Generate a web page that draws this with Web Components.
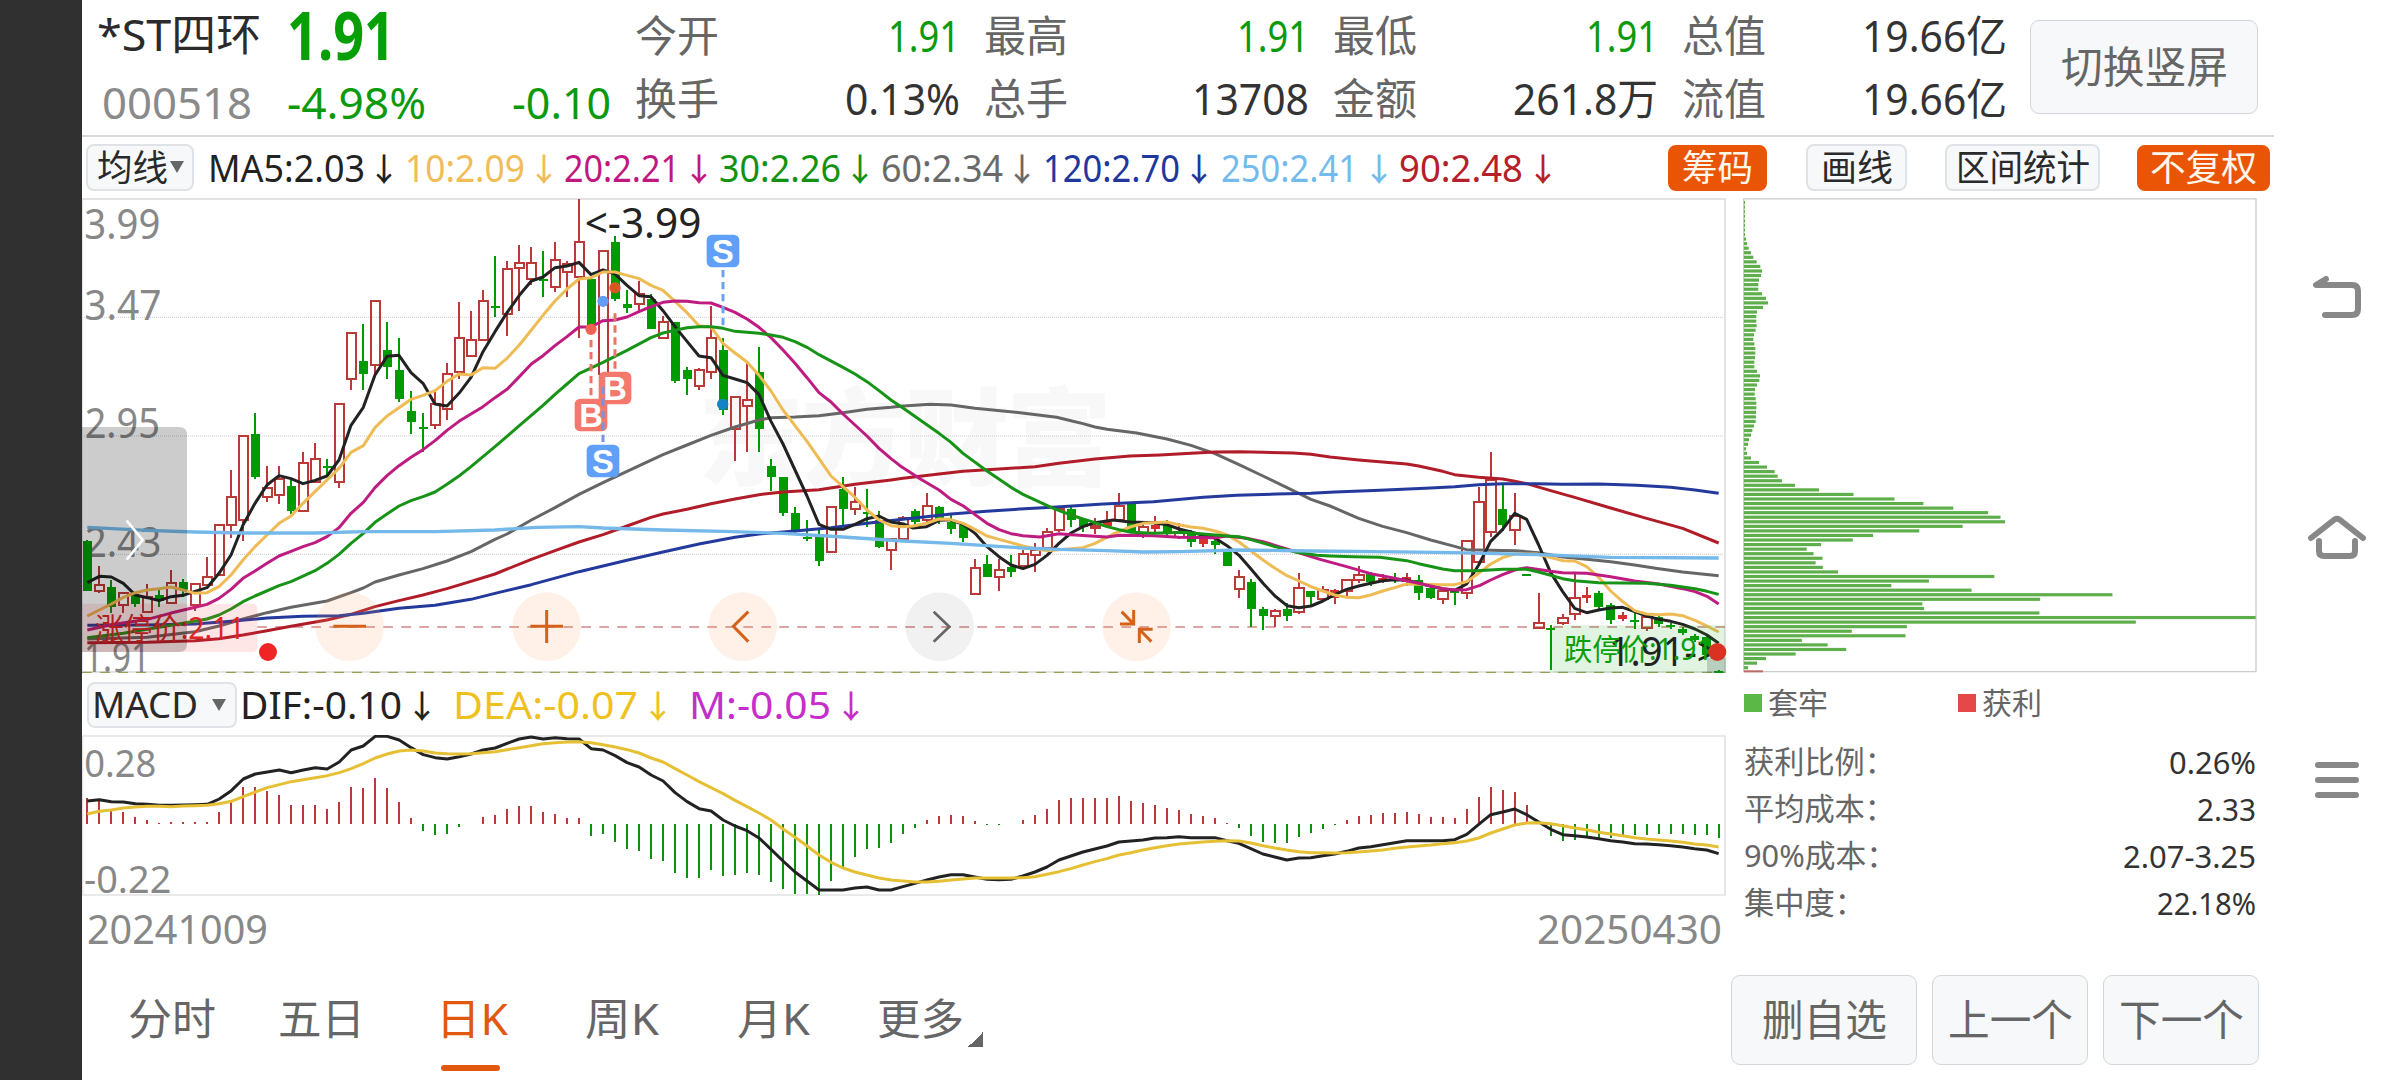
<!DOCTYPE html>
<html lang="zh-CN">
<head>
<meta charset="utf-8">
<title>*ST四环 000518</title>
<style>
html,body{margin:0;height:100%;background:#fff;overflow:hidden}
body{font-family:"Noto Sans","Noto Sans CJK SC",sans-serif;color:#2b2b2b}
</style>
</head>
<body>
<stock-app></stock-app>
<script>
const define=(name,cls)=>customElements.define(name,cls);
const shadow=(el,html)=>{const r=el.attachShadow({mode:'open'});r.innerHTML=html;return r};

/* One line of text condensed or stretched to a given width. */
define('fit-text',class extends HTMLElement{
  connectedCallback(){
    const w=+this.getAttribute('w'),s=this.getAttribute('s')||42,lh=this.getAttribute('lh')||1.2;
    const r=shadow(this,`<style>:host{display:block;flex:none;width:${w}px;height:${lh}em;font-size:${s}px;line-height:${lh};white-space:nowrap}
      span{display:inline-block;transform-origin:0 50%}</style><span><slot></slot></span>`);
    const sp=r.querySelector('span');
    sp.style.transform=`scaleX(${w/sp.getBoundingClientRect().width})`;
  }
});

define('push-button',class extends HTMLElement{
  connectedCallback(){
    shadow(this,`<style>:host{display:flex;flex:none;box-sizing:border-box;align-items:center;justify-content:center;width:${this.getAttribute('w')}px;height:${this.getAttribute('h')}px;
      border:2px solid #dfe2e6;border-radius:${this.getAttribute('r')||8}px;background:#f7f8fa;color:#2a2a2a}
      :host([soft]){color:#666;border-width:1.5px;border-color:#d2d6dc}
      :host([active]){background:#e95505;border-color:#e95505;color:#fff6ec}</style><slot></slot>`);
  }
});

define('quote-stat',class extends HTMLElement{
  connectedCallback(){
    const a=n=>this.getAttribute(n);
    const line=(l,v,w,c)=>`<div><fit-text class="l" w="84" s="43">${l}</fit-text><fit-text w="${w}" s="43" style="color:${c}">${v}</fit-text></div>`;
    shadow(this,`<style>:host{display:flex;flex:none;flex-direction:column;width:325px;padding-top:4px;margin-right:24px;color:#333}
      div{display:flex;height:63.5px;align-items:center;justify-content:space-between}.l{color:#666}</style>
      ${line(a('l1'),a('v1'),a('w1'),a('c1')||'#333')}${line(a('l2'),a('v2'),a('w2'),'#333')}`);
  }
});

define('quote-header',class extends HTMLElement{
  connectedCallback(){
    shadow(this,`<style>:host{display:flex;box-sizing:border-box;width:2192px;height:137px;border-bottom:2px solid #d9d9d9;padding-left:15px}
      .c{display:flex;flex-direction:column;flex:none}.r1{display:flex;align-items:center;height:70px}.r2{display:flex;align-items:center;height:68px;justify-content:space-between}
      .g{color:#0b9a0b}</style>
      <div class="c" style="width:190px"><div class="r1"><fit-text w="164" s="44">*ST四环</fit-text></div>
        <div class="r2" style="justify-content:flex-start;padding-left:5px;color:#8a8a8a"><fit-text w="150" s="44.500">000518</fit-text></div></div>
      <div class="c g" style="width:324px;margin-right:24px"><div class="r1" style="height:71px;margin-bottom:-1px"><fit-text w="108" s="67" lh="1" style="font-weight:700;color:#06a006">1.91</fit-text></div>
        <div class="r2"><fit-text w="139" s="44.500">-4.98%</fit-text><fit-text w="99" s="44.500">-0.10</fit-text></div></div>
      <quote-stat l1="今开" v1="1.91" w1="72" c1="#0b9a0b" l2="换手" v2="0.13%" w2="115"></quote-stat>
      <quote-stat l1="最高" v1="1.91" w1="72" c1="#0b9a0b" l2="总手" v2="13708" w2="117"></quote-stat>
      <quote-stat l1="最低" v1="1.91" w1="72" c1="#0b9a0b" l2="金额" v2="261.8万" w2="145"></quote-stat>
      <quote-stat l1="总值" v1="19.66亿" w1="145" l2="流值" v2="19.66亿" w2="145"></quote-stat>
      <push-button soft w="228" h="94" r="9" style="margin:20px 0 0 -1px"><fit-text w="167" s="43">切换竖屏</fit-text></push-button>`);
  }
});

/* name:value readout followed by its trend arrow */
define('trend-value',class extends HTMLElement{
  connectedCallback(){
    const a=n=>this.getAttribute(n);
    shadow(this,`<style>:host{display:flex;flex:none;align-items:center;color:${a('c')};margin-left:${a('gap')}px}
      .a{width:16px;margin-left:${a('ag')||11}px;font:500 32px/1.2 "Noto Sans CJK SC",sans-serif;display:flex;justify-content:center}</style>
      <fit-text w="${a('w')}" s="${a('s')||38}"><slot></slot></fit-text><span class="a">↓</span>`);
  }
});

define('average-bar',class extends HTMLElement{
  connectedCallback(){
    shadow(this,`<style>:host{display:flex;height:61px;align-items:center;padding-left:4px;width:2188px;box-sizing:border-box}
      i{border:7.5px solid transparent;border-top:12px solid #666;border-bottom:0;margin:-2px 0 0 2px}</style>
      <push-button w="108" h="47"><fit-text w="71" s="36">均线</fit-text><i></i></push-button>
      <trend-value gap="14" w="157" c="#222">MA5:2.03</trend-value>
      <trend-value gap="13" w="120" c="#f0bd58">10:2.09</trend-value>
      <trend-value gap="12" w="116" c="#c0187f">20:2.21</trend-value>
      <trend-value gap="12" w="122" c="#119311">30:2.26</trend-value>
      <trend-value gap="13" w="122" c="#6a6a6a">60:2.34</trend-value>
      <trend-value gap="13" w="137" c="#20379d">120:2.70</trend-value>
      <trend-value gap="14" w="137" ag="13" c="#73bbec">250:2.41</trend-value>
      <trend-value gap="12" w="124" ag="12" c="#b5202a">90:2.48</trend-value>
      <push-button active w="99" h="46" style="margin-left:auto"><fit-text w="71" s="36">筹码</fit-text></push-button>
      <push-button w="101" h="47" style="margin-left:39px"><fit-text w="72" s="36">画线</fit-text></push-button>
      <push-button w="155" h="47" style="margin-left:38px"><fit-text w="134" s="36">区间统计</fit-text></push-button>
      <push-button active w="133" h="46" style="margin-left:37px"><fit-text w="107" s="36">不复权</fit-text></push-button>`);
  }
});

const X=i=>52+35.985*i;
const U='#009b00',D='#b93a36';
/* colour, high, open/close top, open/close bottom, low */
const CANDLES=`g1050,1053,1202,1202 r1128,1186,1204,1208 g1170,1190,1250,1270 r1207,1209,1245,1270 g1210,1215,1243,1250 r1183,1222,1266,1268 g1198,1215,1233,1250 r1141,1180,1238,1243 g1168,1176,1200,1220 r1178,1182,1245,1262 r1101,1160,1184,1186 r1003,1005,1155,1158 r841,920,1005,1044 r735,738,990,1052 g670,731,860,867 r828,893,922,935 r828,868,915,942 g870,889,963,972 r786,818,964,966 r759,806,876,878 g807,828,834,862 r640,642,876,894 r427,429,568,600 g403,513,552,600 r331,333,526,553 g397,479,531,567 g445,541,627,635 g602,663,696,731 g670,711,717,785 r600,641,706,717 r519,552,657,690 r336,443,546,567 r363,450,498,501 r301,333,451,453 g198,349,355,381 r213,237,371,438 r165,218,234,362 r172,218,266,286 g184,267,273,321 r156,210,290,307 r213,222,246,321 r26,156,260,444 g262,266,409,412 r181,184,553,556 g137,156,327,334 g300,341,354,368 r274,313,342,366 g313,328,416,418 r377,396,445,447 g396,397,573,580 g532,540,567,615 r534,539,589,600 r348,443,546,567 g445,479,661,676 r619,621,717,812 r519,629,649,786 g472,546,717,786 g807,827,860,903 g861,861,969,977 g950,970,1027,1035 g990,1040,1046,1052 g1020,1032,1112,1128 r948,950,1086,1090 g861,896,957,1005 r890,935,958,976 g896,967,973,1012 g963,990,1072,1074 r1045,1048,1080,1141 r977,983,1046,1057 g957,964,996,1004 r909,948,990,995 g948,950,990,1003 g975,995,1016,1031 g1003,1006,1044,1057 r1108,1133,1211,1213 g1094,1121,1161,1162 r1107,1140,1162,1203 g1094,1130,1147,1161 r1080,1091,1128,1132 r1059,1080,1095,1147 r1013,1026,1073,1076 r955,958,1020,1025 g950,957,990,1011 g985,988,1012,1025 r985,1008,1014,1031 s963,996,1008,1010 r909,949,990,996 g940,943,1025,1027 r995,1012,1030,1045 s977,1006,1016,1028 g990,1005,1028,1045 r998,1026,1042,1046 g1020,1030,1057,1072 s1035,1048,1063,1072 g1040,1054,1066,1092 g1080,1086,1127,1128 r1141,1160,1198,1223 g1168,1177,1257,1311 g1251,1258,1278,1319 r1257,1263,1279,1312 g1238,1258,1278,1292 r1149,1195,1266,1271 g1202,1204,1222,1245 r1188,1200,1226,1230 s1198,1200,1223,1243 r1168,1171,1204,1220 r1128,1154,1171,1180 g1145,1151,1175,1187 s1151,1164,1170,1180 g1150,1163,1169,1180 s1148,1160,1175,1187 g1156,1170,1208,1229 g1190,1194,1223,1228 r1198,1204,1227,1243 g1198,1204,1210,1244 r1050,1052,1210,1228 r890,935,1117,1120 r785,870,1026,1042 g883,958,1004,1023 r910,977,1019,1066 g1152,1152,1158,1158 r1210,1298,1315,1317 g1305,1315,1321,1440 r1272,1283,1300,1306 r1150,1223,1272,1290 s1190,1214,1225,1240 g1204,1210,1250,1258 g1238,1245,1290,1303 s1265,1275,1288,1293 g1270,1290,1296,1318 r1275,1280,1314,1323 g1278,1280,1303,1312 g1298,1305,1311,1318 g1312,1318,1330,1335 g1332,1338,1350,1357 g1335,1342,1395,1400 g1440,1443,1450,1450`;
const candle=(t,i)=>{
  const [h,a,b,l]=t.slice(1).split(',').map(Number),x=X(i),k=t[0],c=k==='g'?U:D;
  let s=`<path d="M${x} ${h}V${a}M${x} ${b}V${l}" stroke="${c}" stroke-width="6"/>`;
  s+=k==='r'?`<rect x="${x-13}" y="${a}" width="28" height="${b-a}" fill="none" stroke="${c}" stroke-width="6"/>`
            :`<rect x="${x-13}" y="${a}" width="27" height="${b-a}" fill="${k==='g'?U:'#d92f2f'}"/>`;
  return s;
};
const AVERAGES=[
['#666',9,'52,1347 232,1342 375,1325 447,1308 519,1287 591,1268 663,1252 771,1233 843,1208 880,1194 915,1176 987,1155 1059,1136 1131,1113 1203,1085 1275,1048 1311,1032 1384,990 1455,953 1527,913 1599,878 1671,844 1779,794 1851,765 1923,736 1995,711 2067,690 2103,683 2175,681 2247,677 2319,668 2391,658 2463,652 2490,649 2580,643 2643,645 2715,655 2850,668 2960,682 3003,692 3039,701 3075,711 3111,718 3200,729 3291,747 3363,766 3435,791 3507,824 3579,858 3651,893 3723,928 3780,948 3866,985 3938,1009 4010,1028 4082,1050 4154,1069 4190,1079 4262,1081 4334,1082 4406,1088 4478,1101 4550,1108 4622,1115 4694,1125 4767,1136 4838,1146 4946,1157'],
['#b01c28',9,'52,1358 232,1357 375,1352 447,1346 519,1335 591,1322 663,1309 771,1290 843,1273 915,1250 987,1232 1059,1215 1131,1196 1203,1174 1275,1152 1384,1108 1455,1082 1527,1056 1599,1034 1671,1008 1743,982 1779,972 1851,958 1923,941 1995,927 2067,914 2139,906 2247,899 2355,883 2463,870 2499,865 2607,852 2679,844 2787,837 2895,830 2967,820 3075,807 3180,798 3270,795 3363,790 3435,786 3507,785 3579,787 3670,789 3723,793 3780,801 3866,810 3938,816 4010,822 4046,828 4118,844 4154,854 4226,862 4298,867 4334,874 4370,881 4442,902 4514,922 4622,954 4730,985 4838,1015 4946,1059'],
['#233a9c',9,'52,1306 232,1305 375,1302 483,1294 591,1284 699,1279 807,1277 880,1270 987,1255 1095,1246 1203,1228 1275,1210 1384,1184 1527,1145 1671,1111 1779,1086 1887,1062 1995,1042 2067,1032 2175,1023 2283,1013 2391,1000 2499,988 2643,972 2750,964 2850,957 2960,951 3100,942 3250,935 3400,922 3500,916 3620,912 3723,910 3794,906 3930,901 4082,894 4154,890 4226,884 4298,881 4400,881 4478,883 4586,882 4700,886 4802,892 4875,900 4946,910'],
['#222',9,'52,1178 88,1159 124,1161 160,1180 196,1215 232,1223 267,1232 303,1220 339,1216 375,1204 411,1193 447,1150 483,1095 519,1005 555,940 591,885 627,857 663,866 699,881 735,871 771,858 807,810 843,706 880,652 915,555 951,499 987,496 1023,548 1059,580 1095,642 1131,648 1167,610 1203,562 1239,485 1275,425 1311,368 1348,316 1384,273 1419,261 1455,233 1491,228 1527,217 1563,254 1599,240 1635,252 1671,286 1707,317 1743,320 1779,362 1815,410 1851,454 1887,498 1923,503 1959,556 1995,567 2031,578 2067,614 2103,694 2139,762 2175,840 2211,918 2247,1003 2283,1018 2319,1018 2355,1003 2391,986 2427,978 2463,996 2500,1002 2530,1014 2570,1010 2607,991 2640,989 2679,1003 2715,1030 2751,1070 2787,1100 2823,1125 2859,1136 2895,1123 2931,1096 2967,1060 3003,1029 3039,1010 3075,998 3130,990 3180,996 3250,998 3291,1004 3327,1017 3363,1026 3399,1036 3435,1044 3471,1067 3507,1096 3543,1137 3579,1180 3615,1218 3651,1247 3687,1253 3723,1248 3759,1233 3794,1214 3830,1198 3866,1188 3902,1180 3938,1172 3974,1169 4010,1170 4046,1180 4082,1188 4118,1196 4154,1201 4190,1182 4226,1125 4262,1054 4298,1018 4334,970 4370,988 4406,1065 4442,1148 4478,1205 4514,1255 4550,1268 4586,1260 4622,1254 4658,1252 4694,1265 4730,1278 4767,1288 4802,1294 4838,1303 4875,1317 4911,1335 4946,1360'],
['#efbb55',9,'52,1278 88,1260 124,1242 160,1222 196,1208 232,1200 267,1196 303,1191 339,1200 375,1210 411,1208 447,1190 483,1155 519,1110 555,1070 591,1035 627,1000 663,978 699,940 735,905 771,870 807,835 843,787 880,767 915,713 951,678 987,653 1023,628 1059,616 1095,602 1131,574 1167,552 1203,555 1239,533 1275,535 1311,505 1348,465 1384,420 1419,376 1455,333 1491,297 1527,267 1563,263 1599,246 1635,246 1671,256 1707,266 1743,286 1779,301 1815,334 1851,368 1887,407 1923,411 1959,460 1995,489 2031,516 2067,556 2103,603 2139,660 2175,707 2211,754 2247,806 2283,858 2319,890 2355,922 2391,960 2427,990 2463,1007 2499,1010 2530,1008 2570,1000 2607,987 2640,988 2679,1000 2715,1018 2751,1038 2787,1048 2823,1058 2859,1068 2895,1076 2931,1082 2967,1079 3003,1076 3039,1073 3075,1060 3130,1032 3180,1011 3220,1000 3291,996 3327,1004 3363,1011 3399,1015 3435,1023 3471,1035 3507,1056 3543,1083 3579,1110 3615,1135 3651,1157 3687,1173 3723,1190 3759,1203 3794,1215 3830,1222 3866,1223 3902,1215 3938,1203 3974,1193 4010,1182 4046,1183 4118,1184 4154,1184 4190,1175 4226,1150 4262,1122 4298,1103 4334,1092 4400,1092 4442,1103 4478,1112 4514,1113 4550,1130 4586,1162 4622,1203 4658,1235 4694,1262 4730,1272 4767,1274 4802,1272 4838,1277 4875,1291 4911,1308 4946,1326'],
['#be1c80',9,'52,1320 124,1304 232,1288 300,1270 375,1252 411,1243 447,1225 483,1198 519,1165 555,1143 591,1120 627,1098 663,1084 699,1070 735,1058 771,1040 807,1013 843,970 880,937 915,893 951,857 987,827 1023,802 1059,779 1095,752 1131,721 1167,694 1203,672 1239,650 1275,623 1311,598 1348,560 1384,522 1419,497 1455,467 1491,440 1527,411 1563,411 1599,392 1635,390 1671,381 1707,365 1743,350 1779,337 1815,333 1851,334 1887,338 1923,339 1959,352 1995,367 2031,387 2067,412 2103,443 2139,480 2175,520 2211,563 2247,608 2283,636 2319,672 2355,705 2391,738 2427,775 2463,806 2490,827 2550,866 2607,900 2643,928 2680,948 2715,974 2751,1000 2787,1019 2823,1031 2859,1037 2910,1041 2967,1031 3003,1034 3110,1041 3150,1036 3250,1037 3327,1042 3435,1043 3471,1038 3530,1045 3579,1055 3615,1066 3670,1083 3723,1100 3750,1108 3830,1130 3902,1151 3974,1165 4046,1180 4118,1196 4154,1200 4190,1199 4230,1186 4262,1170 4298,1154 4334,1140 4370,1133 4442,1144 4478,1148 4550,1150 4622,1160 4694,1173 4767,1182 4838,1196 4875,1205 4911,1219 4946,1242'],
['#179317',9,'52,1343 160,1330 267,1312 339,1300 411,1287 447,1275 483,1257 519,1235 555,1218 627,1187 663,1175 735,1142 771,1120 807,1093 843,1060 880,1030 915,997 951,972 987,948 1023,932 1059,920 1095,906 1131,883 1167,858 1203,830 1239,800 1275,770 1311,739 1348,707 1419,646 1455,613 1491,582 1527,551 1599,517 1671,481 1743,443 1779,429 1815,421 1851,413 1887,410 1923,410 1959,415 1995,424 2067,430 2103,435 2139,442 2175,455 2211,472 2247,494 2319,532 2355,552 2391,575 2427,602 2463,630 2500,655 2607,730 2643,757 2679,790 2751,843 2823,892 2859,913 2950,955 3003,975 3039,987 3075,998 3111,1010 3147,1019 3183,1027 3250,1030 3340,1027 3400,1032 3471,1038 3507,1040 3543,1049 3615,1070 3680,1087 3740,1096 3780,1098 3850,1100 3930,1102 4010,1112 4046,1121 4118,1137 4154,1142 4220,1142 4298,1138 4370,1138 4406,1146 4478,1166 4514,1172 4586,1178 4730,1180 4802,1186 4875,1196 4911,1204 4946,1213'],
['#74b9e9',10,'52,1012 232,1021 375,1026 519,1029 735,1029 880,1025 1095,1025 1275,1020 1400,1012 1527,1010 1599,1014 1779,1020 1959,1024 2139,1030 2319,1041 2499,1053 2643,1060 2859,1074 2967,1078 3111,1082 3220,1086 3330,1085 3507,1080 3723,1083 3850,1084 4154,1088 4406,1094 4622,1102 4946,1104']];
const line=(c,w,p)=>`<polyline points="${p}" fill="none" stroke="${c}" stroke-width="${w}" stroke-linejoin="round"/>`;
const label=(x,mid,w,s,c,t,extra='')=>`<text x="${x}" y="${mid+s*.357}" font-size="${s}" fill="${c}" textLength="${w}" lengthAdjust="spacingAndGlyphs" ${extra}>${t}</text>`;
const badge=(x,y,c,t)=>`<rect x="${x-49}" y="${y-49}" width="98" height="98" rx="17" fill="${c}"/><text x="${x}" y="${y+35}" font-family="Liberation Sans,sans-serif" font-weight="700" font-size="98" text-anchor="middle" fill="#fff">${t}</text>`;
const dash=(x,a,b,c)=>`<path d="M${x} ${a}V${b}" stroke="${c}" stroke-width="9" stroke-dasharray="22 14"/>`;

define('candle-chart',class extends HTMLElement{
  connectedCallback(){
    shadow(this,`<style>:host{display:block;width:1644px;height:476px}svg{display:block;overflow:visible;font-family:"Noto Sans","Noto Sans CJK SC",sans-serif}</style>
    <svg width="1644" height="476" viewBox="36 24 4932 1428">
      <text x="1885" y="860" font-family="Noto Sans CJK SC" font-weight="900" font-size="316" fill="#f8f8f8" textLength="1240">东方财富</text>
      <path d="M36 382H4964M36 738H4964M36 1093H4964" stroke="#ccc" stroke-width="3" stroke-dasharray="3 3"/>
      <path d="M36 27H4965V1446H36" fill="none" stroke="#e3e3e3" stroke-width="6"/><path d="M37.5 24V1450" stroke="#e3e3e3" stroke-width="3"/>
      <path d="M36 1447H4965" stroke="#989e52" stroke-width="3.5" stroke-dasharray="30 24"/>
      <path d="M562 1311H4965" stroke="#b94a46" stroke-width="3.5" stroke-dasharray="29 25"/>
      ${label(43,101,228,125,'#888','3.99')}${label(43,345,232,125,'#888','3.47')}${label(44,700,226,125,'#888','2.95')}${label(44,1056,230,125,'#888','2.43')}${label(42,1400,198,125,'#888','1.91')}
      <g shape-rendering="crispEdges">${CANDLES.split(' ').map(candle).join('')}</g>
      ${AVERAGES.map(a=>line(...a)).join('')}
      ${dash(1563,450,617,'#f27064')}${dash(1635,370,540,'#f27064')}${dash(1959,240,410,'#6aa3f5')}
      <circle cx="1563" cy="418" r="17" fill="#f06352"/><circle cx="1599" cy="334" r="17" fill="#629df8"/><circle cx="1635" cy="293" r="17" fill="#d25a20"/><circle cx="1958" cy="643" r="17" fill="#1684c4"/>
      ${badge(1563,675,'#f4796c','B')}${badge(1635,594,'#f4796c','B')}${dash(1599,590,757,'#7894e0')}${badge(1599,813,'#60a0f9','S')}${badge(1959,183,'#60a0f9','S')}
      ${label(1544,98,350,125,'#222','&lt;-3.99')}
      <path d="M36 1241H546Q562 1241 562 1257V1370Q562 1386 546 1386H36Z" fill="#ff3c3c" fill-opacity=".13"/>
      ${label(76,1316,448,90,'#dc2626','涨停价:2.11')}
      <path d="M36 711H327Q351 711 351 735V1362Q351 1386 327 1386H36Z" fill="#000" fill-opacity=".2"/>
      <path d="M170 992L218 1050L170 1109" fill="none" stroke="#fff" stroke-width="8"/>
      <circle cx="594" cy="1386" r="27" fill="#f02424"/>
      <g fill="#ff9966" fill-opacity=".15"><circle cx="839" cy="1310" r="103"/><circle cx="1430" cy="1310" r="103"/><circle cx="2018" cy="1310" r="103"/><circle cx="3200" cy="1310" r="103"/></g>
      <circle cx="2609" cy="1310" r="103" fill="#000" fill-opacity=".055"/>
      <g fill="none" stroke="#d4621b" stroke-width="9"><path d="M790 1309H888M1381 1309H1479M1430 1260V1359M2035 1265L1990 1309L2035 1355"/>
      <path d="M3150 1302H3191V1260M3155 1265L3189 1300M3208 1359V1318H3248M3210 1320L3244 1355"/></g>
      <path d="M2591 1265L2638 1310L2591 1355" fill="none" stroke="#666" stroke-width="8"/>
      <path d="M4965 1306H4458Q4446 1306 4446 1318V1437Q4446 1449 4458 1449H4965Z" fill="#28a828" fill-opacity=".14"/>
      <rect x="4911" y="1403" width="57" height="46" fill="#2a5040" fill-opacity=".22"/>
      ${label(4616,1384,330,120,'#222','1.91-&gt;')}${label(4482,1377,446,90,'#0a9e0a','跌停价:1.91')}
      <circle cx="4942" cy="1386" r="27" fill="#d93222"/>
    </svg>`);
  }
});

const HIST='384,394,418,426,441,450,459,456,456,456,456,426,396,351,351,363,375,405,405,405,417,396,351,354,324,354,396,444,483,495,492,471,462,441,435,417,408,408,426,432,444,444,498,492,516,537,543,567,573,609,624,624,600,618,615,609,615,636,657,672,672,675,633,597,561,537,534,519,492,474,450,438,435,438,453,465,465,462,450,435,417,390,384,384,384,384,378,393,399,405,414,420,432,438,444,459,474,498,516,519,519,501,489,477,465,450,438,435,429,429,426,432,441,441,444,417,381,351,360,366,405,459,498,513,510,501,507,504,498,495,495,492,492,492,495,495,504'.split(',');
const DIF='393,389,395,396,401,403,406,406,405,404,403,387,362,327,312,306,300,308,300,293,297,276,240,228,199,199,210,233,254,263,267,260,252,240,234,220,207,201,207,203,206,207,236,240,257,278,291,315,333,368,395,416,423,450,468,482,504,538,573,606,633,660,660,660,654,651,660,660,650,640,630,621,614,614,621,628,629,628,618,606,591,570,558,546,537,528,516,513,510,504,503,500,503,503,503,512,520,536,552,561,570,564,563,557,552,544,534,530,524,518,512,512,512,512,509,493,463,434,426,417,434,456,478,494,497,501,506,512,516,521,522,524,527,531,536,540,551'.split(',');
const DEA='432,424,420,414,411,409,409,410,408,407,406,401,394,380,366,353,344,335,329,323,317,308,296,281,264,252,243,240,243,249,251,252,251,248,245,239,233,227,221,218,216,215,218,224,231,239,249,264,276,296,315,335,353,371,391,410,429,450,477,502,528,555,577,594,606,615,624,630,633,636,636,634,630,627,624,624,624,624,623,620,613,605,596,585,575,566,555,548,540,533,527,522,519,516,514,512,513,519,527,534,540,545,548,548,549,548,546,543,540,535,531,528,525,521,518,513,504,489,477,465,459,458,461,467,474,479,487,492,497,503,507,510,513,517,522,525,531'.split(',');
const pts=a=>a.map((y,i)=>X(i)+','+y).join(' ');
define('macd-chart',class extends HTMLElement{
  connectedCallback(){
    shadow(this,`<style>:host{display:block;width:1644px;height:161px}svg{display:block;font-family:"Noto Sans",sans-serif}</style>
    <svg width="1644" height="161" viewBox="36 195 4932 483">
      <path d="M37.5 198H4965V675H37.5Z" fill="none" stroke="#e2e2e2" stroke-width="5"/>
      ${label(43,279,216,116,'#888','0.28')}${label(42,627,262,116,'#888','-0.22')}
      <g shape-rendering="crispEdges">${HIST.map((y,i)=>`<path d="M${X(i)} 462V${y}" stroke="${y<462?D:'#0f900f'}" stroke-width="6.500"/>`).join('')}</g>
      ${line('#222',9,pts(DIF))}${line('#e6c034',9,pts(DEA))}
    </svg>`);
  }
});

const CHIPS=[3,3,3,3,3,3,3,3,6,9,14,21,28,38,49,54,51,45,43,43,54,66,72,57,39,37,37,38,35,30,28,31,34,34,33,31,31,39,48,46,39,33,32,35,37,37,36,36,35,30,25,21,15,12,6,9,21,45,69,92,101,114,153]
  .concat([259,359,478,562,649,750,786,799,676,550,416,357,265,223,243,269,249,270,314,768,578,469,702,1111,901,559,564,899,1527,1179,514,354,510,209,284,338,191,105,79,53].map(v=>(v-41)*1.033));
define('chip-chart',class extends HTMLElement{
  connectedCallback(){
    shadow(this,`<style>:host{display:block;width:515px;height:475px}svg{display:block}</style>
    <svg width="515" height="475" viewBox="39 26 1545 1425">
      <path d="M41 28.5H1578V1447H41Z" fill="none" stroke="#ccc" stroke-width="4"/>
      ${CHIPS.map((w,k)=>{const y=39.5+13.68*k;return `<rect x="42" y="${y-4.5}" width="${w}" height="9.5" fill="#5fae4c"/>`}).join('')}
      <rect x="42" y="1443" width="57" height="6" fill="#b86a66"/>
    </svg>`);
  }
});

define('macd-bar',class extends HTMLElement{
  connectedCallback(){
    shadow(this,`<style>:host{display:flex;height:61px;align-items:center;padding-left:5px}
      i{border:7px solid transparent;border-top:12px solid #666;border-bottom:0;margin-left:14px}</style>
      <push-button w="150" h="46" style="justify-content:flex-start;text-indent:0"><fit-text w="106" s="37" style="margin-left:3px">MACD</fit-text><i></i></push-button>
      <trend-value gap="3" w="162" s="39" c="#222" ag="12">DIF:-0.10</trend-value>
      <trend-value gap="23" w="185" s="39" c="#efc11f" ag="12">DEA:-0.07</trend-value>
      <trend-value gap="23" w="142" s="39" c="#c52ecb" ag="12">M:-0.05</trend-value>`);
  }
});

define('chip-info',class extends HTMLElement{
  connectedCallback(){
    const row=(l,lw,v,vw)=>`<div class="r"><fit-text w="${lw}" s="31">${l}</fit-text><fit-text class="v" w="${vw}" s="31.5">${v}</fit-text></div>`;
    shadow(this,`<style>:host{display:block;color:#666;width:513px}
      .k{display:flex;align-items:center;height:59px;padding-left:1px;margin-bottom:6px}b{width:18px;height:18px;margin-right:6px}
      .r{display:flex;justify-content:space-between;align-items:center;height:47px;padding-left:1px}.v{color:#333}</style>
      <div class="k"><b style="background:#5bb847"></b><fit-text w="60" s="30">套牢</fit-text><b style="background:#e64848;margin-left:130px"></b><fit-text w="60" s="30">获利</fit-text></div>
      ${row('获利比例：',151,'0.26%',87)}${row('平均成本：',151,'2.33',59)}${row('90%成本：',153,'2.07-3.25',133)}${row('集中度：',121,'22.18%',99)}`);
  }
});

define('period-tab',class extends HTMLElement{
  connectedCallback(){
    shadow(this,`<style>:host{display:flex;flex:none;flex-direction:column;height:98px;color:#666;position:relative}
      :host([active]){color:#e0590f}fit-text{margin-top:18px}
      :host([active])::after{content:"";flex:none;width:59px;height:6px;border-radius:3px;background:#e0590f;margin:20px 0 0 5px}
      :host([more])::after{content:"";position:absolute;right:-19px;top:57px;width:15px;height:15px;background:linear-gradient(135deg,transparent 50%,#666 50%)}</style>
      <fit-text w="${this.getAttribute('w')}" s="43"><slot></slot></fit-text>`);
  }
});

define('nav-rail',class extends HTMLElement{
  connectedCallback(){
    shadow(this,`<style>:host{display:flex;flex:none;flex-direction:column;width:126px;height:1080px;align-items:center}svg{flex:none;display:block}</style>
      <svg width="126" height="1080" viewBox="2274 0 126 1080" fill="none" stroke="#888" stroke-width="6" stroke-linecap="round" stroke-linejoin="round">
      <path d="M2326 279L2316 285H2352Q2358 285 2358 291V309Q2358 315 2352 315H2325"/>
      <path d="M2311 538L2334.500 519.500Q2337 518 2339.500 519.500L2363 538M2319 541V551Q2319 556 2324 556H2350Q2355 556 2355 551V541"/>
      <path d="M2318 765H2356M2318 780H2356M2318 795H2356"/></svg>`);
  }
});

define('stock-app',class extends HTMLElement{
  connectedCallback(){
    shadow(this,`<style>:host{display:flex;width:2400px;height:1080px;background:#fff}
      .notch{flex:none;width:82px;background:#303030}main{flex:none;width:2192px;display:flex;flex-direction:column}
      .body{display:grid;grid-template-columns:1644px 515px;column-gap:17px;height:765px}
      .dates{display:flex;justify-content:space-between;align-items:center;height:66px;padding:0 4px 0 5px;color:#888}
      footer{display:flex;padding:0 15px 0 46px;height:105px}
      .t{display:flex;margin-top:12px}.b{display:flex;margin:12px 0 0 auto;gap:15px}</style>
      <div class="notch"></div>
      <main><quote-header></quote-header><average-bar></average-bar>
        <div class="body">
          <section><candle-chart></candle-chart><macd-bar></macd-bar><macd-chart></macd-chart>
            <div class="dates"><fit-text w="181" s="40">20241009</fit-text><fit-text w="185" s="40">20250430</fit-text></div></section>
          <aside><chip-chart></chip-chart><chip-info></chip-info></aside>
        </div>
        <footer><div class="t">
          <period-tab w="88">分时</period-tab><period-tab w="87" style="margin-left:62px">五日</period-tab>
          <period-tab active w="72" style="margin-left:71px">日K</period-tab><period-tab w="74" style="margin-left:77px">周K</period-tab>
          <period-tab w="73" style="margin-left:78px">月K</period-tab><period-tab more w="87" style="margin-left:67px">更多</period-tab></div>
          <div class="b"><push-button soft w="186" h="90" r="9"><fit-text w="125" s="43">删自选</fit-text></push-button>
          <push-button soft w="156" h="90" r="9"><fit-text w="125" s="43">上一个</fit-text></push-button>
          <push-button soft w="156" h="90" r="9"><fit-text w="125" s="43">下一个</fit-text></push-button></div>
        </footer>
      </main>
      <nav-rail></nav-rail>`);
  }
});
</script>
</body>
</html>
